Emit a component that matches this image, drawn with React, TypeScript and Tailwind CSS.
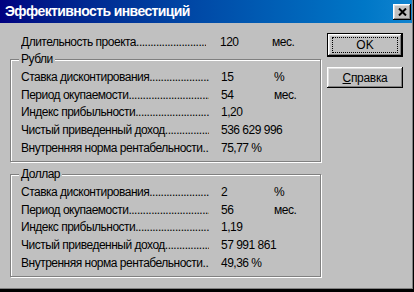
import React from "react";

const font = { fontFamily: '"Liberation Sans", Arial, sans-serif' };

type Row = { label: string; value: string; unit?: string };

const rub: Row[] = [
  { label: "Ставка дисконтирования", value: "15", unit: "%" },
  { label: "Период окупаемости", value: "54", unit: "мес." },
  { label: "Индекс прибыльности", value: "1,20" },
  { label: "Чистый приведенный доход", value: "536 629 996" },
  { label: "Внутренняя норма рентабельности", value: "75,77 %" },
];

const usd: Row[] = [
  { label: "Ставка дисконтирования", value: "2", unit: "%" },
  { label: "Период окупаемости", value: "56", unit: "мес." },
  { label: "Индекс прибыльности", value: "1,19" },
  { label: "Чистый приведенный доход", value: "57 991 861" },
  { label: "Внутренняя норма рентабельности", value: "49,36 %" },
];

const DOTS = ".".repeat(60);

function Label({ text, w }: { text: string; w: string }) {
  return (
    <div className={`flex ${w} overflow-hidden`}>
      <span className="shrink-0">{text}</span>
      <span className="min-w-0 flex-1 overflow-hidden">{DOTS}</span>
    </div>
  );
}

function Line({ r }: { r: Row }) {
  return (
    <div className="flex h-[17.75px] items-center whitespace-nowrap text-[12px] tracking-[-0.5px] text-black">
      <Label text={r.label} w="w-[188px]" />
      <div className="ml-[12px] w-[53px]">{r.value}</div>
      <div>{r.unit ?? ""}</div>
    </div>
  );
}

function Group({ title, rows }: { title: string; rows: Row[] }) {
  return (
    <div className="relative h-[103px] w-[311px] border border-[#808080] pl-[10px] pt-[8px] shadow-[1px_1px_0_#fff,inset_1px_1px_0_#fff]">
      <span className="absolute left-[8px] top-[-8px] bg-[#c0c0c0] px-[2px] text-[12px] leading-[14px] tracking-[-0.5px] text-black">
        {title}
      </span>
      {rows.map((r) => (
        <Line key={r.label} r={r} />
      ))}
    </div>
  );
}

const raised =
  "shadow-[inset_-1px_-1px_0_#000,inset_1px_1px_0_#fff,inset_-2px_-2px_0_#808080,inset_2px_2px_0_#dfdfdf]";

export default function App() {
  return (
    <div className="flex h-[292px] w-[414px] flex-col bg-black pb-[3px] pr-[1px]" style={font}>
      <div className="flex flex-1 flex-col border-b border-r border-[#808080] bg-[#c0c0c0]">
        <div className="flex h-[23px] items-center bg-gradient-to-r from-[#000080] to-[#1084d0] pl-[5px] pr-[1px]">
          <span className="text-[14px] font-bold tracking-[-0.6px] text-white">Эффективность инвестиций</span>
          <div className={`ml-auto flex h-[16px] w-[18px] items-center justify-center bg-[#c0c0c0] ${raised}`}>
            <svg width="9" height="8" viewBox="0 0 9 8">
              <path d="M1 0.5 L8 7.5 M8 0.5 L1 7.5" stroke="#000" strokeWidth="2" />
            </svg>
          </div>
        </div>
        <div className="flex flex-1">
          <div className="ml-[10px] flex flex-col">
            <div className="mt-[10px] flex h-[18px] items-center whitespace-nowrap pl-[11px] text-[12px] tracking-[-0.5px] text-black">
              <Label text="Длительность проекта" w="w-[185px]" />
              <div className="ml-[14px] w-[52px]">120</div>
              <div>мес.</div>
            </div>
            <div className="mt-[8px]">
              <Group title="Рубли" rows={rub} />
            </div>
            <div className="mt-[12px]">
              <Group title="Доллар" rows={usd} />
            </div>
          </div>
          <div className="ml-[6px] flex flex-col pt-[10px]">
            <div className="h-[24px] w-[76px] border border-black">
              <div className={`flex h-full w-full items-center justify-center bg-[#c0c0c0] ${raised}`}>
                <div className="flex h-[16px] w-[66px] items-center justify-center border border-dotted border-black text-[12px] text-black">
                  OK
                </div>
              </div>
            </div>
            <div className={`mt-[10px] flex h-[21px] w-[76px] items-center justify-center bg-[#c0c0c0] text-[12px] tracking-[-0.3px] text-black ${raised}`}>
              <span>
                <span className="underline">С</span>правка
              </span>
            </div>
          </div>
        </div>
      </div>
    </div>
  );
}
